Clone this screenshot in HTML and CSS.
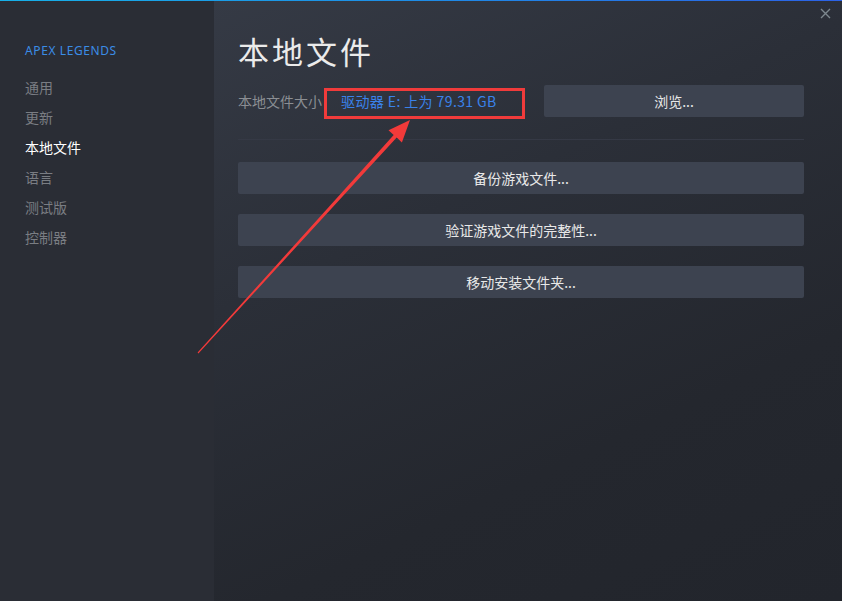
FILE: index.html
```html
<!DOCTYPE html>
<html lang="zh">
<head>
<meta charset="utf-8">
<link rel="stylesheet" href="styles.css">
</head>
<body>
<div class="window">
  <div class="topline"></div>
  <div class="body">
    <nav class="sidebar">
      <div class="game">APEX LEGENDS</div>
      <ul class="menu">
        <li>通用</li>
        <li>更新</li>
        <li class="active">本地文件</li>
        <li>语言</li>
        <li>测试版</li>
        <li>控制器</li>
      </ul>
    </nav>
    <main class="content">
      <h1 class="title">本地文件</h1>
      <div class="size-row">
        <span class="label">本地文件大小</span>
        <span class="link">驱动器 E: 上为 79.31 GB</span>
        <button class="btn browse">浏览...</button>
      </div>
      <div class="sep"></div>
      <div class="actions">
        <button class="btn">备份游戏文件...</button>
        <button class="btn">验证游戏文件的完整性...</button>
        <button class="btn">移动安装文件夹...</button>
      </div>
    </main>
  </div>
  <div class="close">
    <svg width="11" height="11" viewBox="0 0 11 11"><path d="M1 1L10 10M10 1L1 10" stroke="#7c878e" stroke-width="1.4" fill="none"/></svg>
  </div>
  <div class="highlight"></div>
  <svg class="arrow" width="842" height="601" viewBox="0 0 842 601">
    <polygon fill="#f23a3a" points="197.6,352.6 393.7,134.9 388.5,130.2 410,120 401.9,142.4 396.7,137.6 198.4,353.4"/>
  </svg>
</div>
</body>
</html>
```
FILE: styles.css
```css
* { box-sizing: border-box; }
html, body { margin: 0; padding: 0; }
body {
  width: 842px;
  height: 601px;
  overflow: hidden;
  font-family: "Noto Sans CJK SC", "Noto Sans", sans-serif;
  background: #23262d;
}
.window {
  position: relative;
  width: 842px;
  height: 601px;
  display: flex;
  flex-direction: column;
}
.topline {
  height: 1px;
  flex: none;
  background: linear-gradient(to right, #17b0e8, #1e8ce6 50%, #2c62e6);
}
.body {
  flex: 1;
  display: flex;
}
.sidebar {
  width: 214px;
  flex: none;
  background: #2a2d35;
  padding: 42px 0 0 25px;
}
.game {
  font-family: "Noto Sans", sans-serif;
  font-size: 12px;
  line-height: 16px;
  color: #3b8ce6;
  letter-spacing: 0.6px;
}
.menu {
  list-style: none;
  margin: 13px 0 0;
  padding: 0;
}
.menu li {
  font-size: 14px;
  line-height: 30px;
  height: 30px;
  color: #7a7d83;
}
.menu li.active { color: #ffffff; }
.content {
  flex: 1;
  padding: 27px 38px 0 24px;
  background: linear-gradient(155deg, #353a45 0%, #2b2f38 35%, #24272e 70%, #22252c 100%);
}
.title {
  margin: 0;
  font-size: 31px;
  font-weight: normal;
  line-height: 46px;
  color: #ebebeb;
  letter-spacing: 3px;
}
.size-row {
  display: flex;
  align-items: center;
  margin-top: 11px;
  height: 32px;
}
.label {
  font-size: 14px;
  color: #8b8e93;
  width: 103px;
}
.link {
  font-size: 14px;
  color: #3a82ea;
  letter-spacing: 0.4px;
}
.btn {
  font-family: "Noto Sans CJK SC", "Noto Sans", sans-serif;
  border: none;
  border-radius: 2px;
  background: #3d4350;
  color: #e8e8e8;
  font-size: 14px;
  height: 32px;
  padding: 0;
  width: 100%;
}
.browse {
  width: 260px;
  margin-left: auto;
}
.sep {
  height: 1px;
  background: #353945;
  margin-top: 22px;
}
.actions {
  display: flex;
  flex-direction: column;
  gap: 20px;
  margin-top: 22px;
}
.close {
  position: absolute;
  right: 11px;
  top: 8px;
  width: 11px;
  height: 11px;
  display: flex;
}
.highlight {
  position: absolute;
  left: 324px;
  top: 88px;
  width: 201px;
  height: 31px;
  border: 3px solid #f03b3b;
}
.arrow {
  position: absolute;
  left: 0;
  top: 0;
  pointer-events: none;
}
```
